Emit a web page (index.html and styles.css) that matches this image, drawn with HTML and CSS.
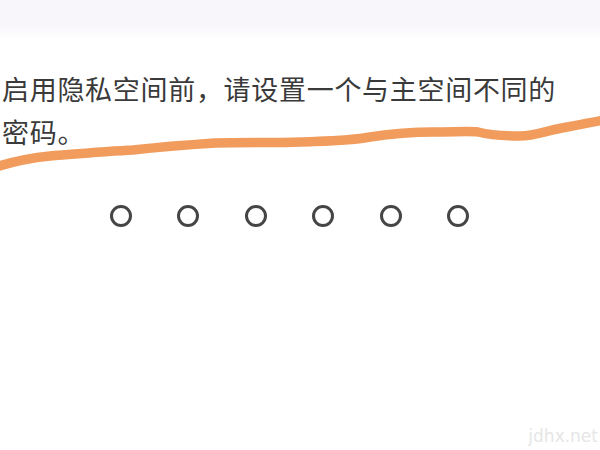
FILE: index.html
```html
<!DOCTYPE html>
<html lang="zh-CN">
<head>
<meta charset="utf-8">
<link rel="stylesheet" href="styles.css">
</head>
<body>
<div class="page">
  <div class="topbar"></div>
  <div class="fade"></div>
  <p class="msg">启用隐私空间前，请设置一个与主空间不同的<br>密码。</p>
  <div class="dots">
    <span class="dot"></span><span class="dot"></span><span class="dot"></span><span class="dot"></span><span class="dot"></span><span class="dot"></span>
  </div>
  <svg class="stroke" width="600" height="450" viewBox="0 0 600 450">
    <path d="M-4 167 C 15 161, 30 158, 50 156 C 75 154, 110 151, 133 150 C 160 147, 185 145, 215 143 C 245 142, 280 143, 300 142 C 325 141, 350 141, 370 137 C 390 134, 410 132, 433 132 C 455 132, 470 131, 478 132 C 486 134, 495 136, 520 136 C 535 136, 545 131, 562 128 C 580 125, 592 122, 604 120" fill="none" stroke="#f19c5c" stroke-width="9.5" stroke-linecap="round" stroke-linejoin="round"/>
  </svg>
  <div class="mark">jdhx.net</div>
</div>
</body>
</html>
```
FILE: styles.css
```css
html, body {
  margin: 0;
  padding: 0;
  background: #ffffff;
}
.page {
  position: relative;
  width: 600px;
  height: 450px;
  overflow: hidden;
  display: flex;
  flex-direction: column;
}
.topbar {
  height: 25px;
  background: #f8f6fa;
  flex: none;
}
.fade {
  height: 15px;
  background: linear-gradient(#f8f6fa, #ffffff);
  flex: none;
}
.msg {
  margin: 27px 0 0 0;
  padding-left: 2px;
  font-family: "Noto Sans CJK SC", "Noto Sans", sans-serif;
  font-size: 27px;
  line-height: 43px;
  color: #3a3a3a;
  letter-spacing: 0.7px;
  white-space: nowrap;
}
.dots {
  margin-top: 52px;
  padding-left: 110px;
  display: flex;
  gap: 45.4px;
}
.dot {
  width: 22px;
  height: 22px;
  box-sizing: border-box;
  border: 3px solid #454545;
  border-radius: 50%;
  flex: none;
}
.stroke {
  position: absolute;
  left: 0;
  top: 0;
  pointer-events: none;
}
.mark {
  position: absolute;
  right: 2px;
  bottom: 4px;
  font-family: "DejaVu Sans", sans-serif;
  font-size: 17px;
  color: #e6e6e6;
}
```
